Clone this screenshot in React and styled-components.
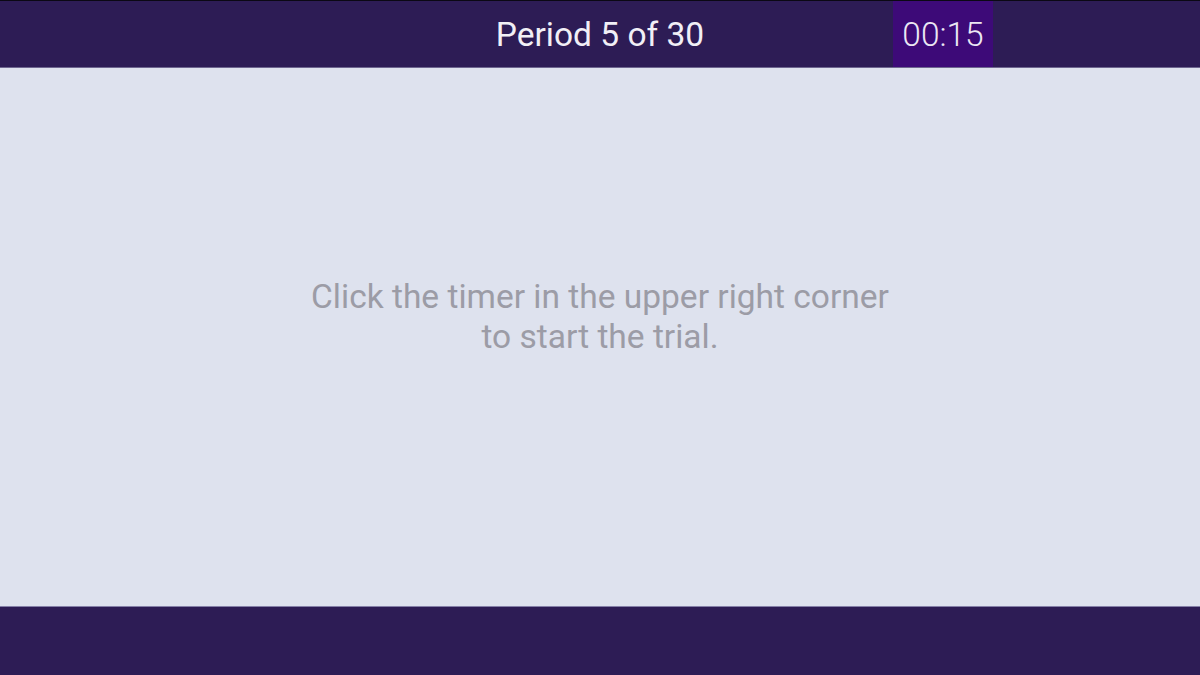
import { createGlobalStyle } from 'styled-components';
import styled from 'styled-components';

const GlobalStyle = createGlobalStyle`
  html, body {
    margin: 0;
    padding: 0;
    background: #dee2ee;
    font-family: Roboto, "Noto Sans", sans-serif;
  }
`

const Page = styled.div`
  display: flex;
  flex-direction: column;
  height: 675px;
  border-top: 1px solid #0b0814;
  box-sizing: border-box;
`

const Header = styled.header`
  display: grid;
  grid-template-columns: 1fr auto 1fr;
  align-items: stretch;
  height: 67px;
  background: #2d1c55;
  border-bottom: 1px solid #6e6690;
  box-sizing: border-box;
`

const Title = styled.h1`
  grid-column: 2;
  margin: 0;
  align-self: center;
  font-size: 33.5px;
  font-weight: 400;
  color: #f1eff6;
`

const TimerCell = styled.div`
  display: flex;
  justify-content: flex-end;
  padding-right: 207px;
`

const Timer = styled.button`
  width: 100px;
  border: none;
  padding: 0;
  background: #3d0a78;
  color: #ece8f4;
  font-family: Roboto, sans-serif;
  font-size: 33.5px;
  font-weight: 300;
  cursor: pointer;
`

const Main = styled.main`
  flex: 1;
  display: flex;
  align-items: center;
  justify-content: center;
  padding-bottom: 40px;
`

const Message = styled.p`
  margin: 0;
  text-align: center;
  font-size: 33.5px;
  line-height: 40px;
  color: #9c9ca6;
`

const Footer = styled.footer`
  height: 68px;
  background: #2d1c55;
  border-top: 1px solid #8580a8;
`

export default function App() {
  return (
    <Page>
      <GlobalStyle />
      <Header>
        <Title>Period 5 of 30</Title>
        <TimerCell>
          <Timer>00:15</Timer>
        </TimerCell>
      </Header>
      <Main>
        <Message>
          Click the timer in the upper right corner
          <br />
          to start the trial.
        </Message>
      </Main>
      <Footer />
    </Page>
  )
}
